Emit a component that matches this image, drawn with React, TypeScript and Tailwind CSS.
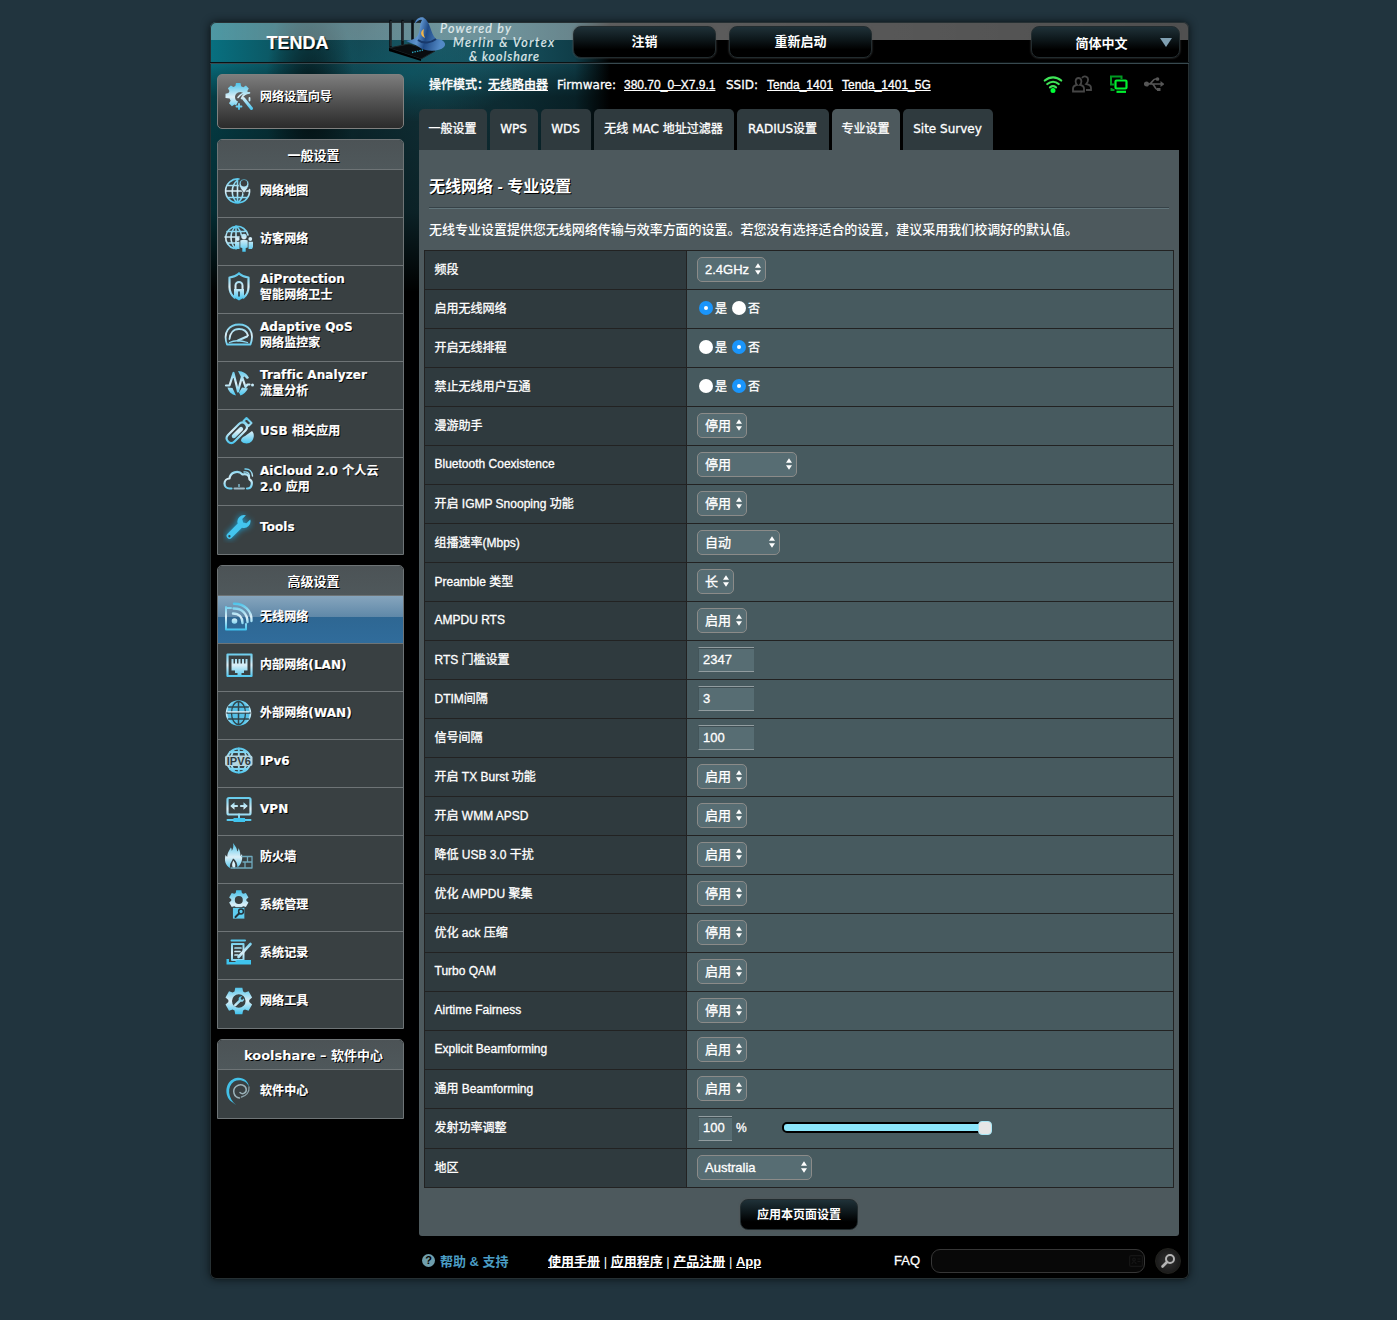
import React from 'react';

const SANS = "font-['Liberation_Sans','Noto_Sans_CJK_SC',sans-serif]";
const MENU = "font-['DejaVu_Sans','Noto_Sans_CJK_SC',sans-serif]";

const G = 'url(#ice)';

function Gear({ cx, cy, r, hole }: { cx: number; cy: number; r: number; hole: number }) {
  const pts: string[] = [];
  for (let i = 0; i < 6; i++) {
    const a = (i * Math.PI) / 3 - Math.PI / 2;
    const p = (rad: number, da: number) =>
      `${(cx + rad * Math.cos(a + da)).toFixed(2)} ${(cy + rad * Math.sin(a + da)).toFixed(2)}`;
    pts.push(p(r * 0.76, -0.42), p(r, -0.26), p(r, 0.26), p(r * 0.76, 0.42));
  }
  const h = `M${cx - hole} ${cy}a${hole} ${hole} 0 1 0 ${hole * 2} 0a${hole} ${hole} 0 1 0 ${-hole * 2} 0Z`;
  return <path d={`M${pts.join('L')}Z${h}`} fill={G} fillRule="evenodd" stroke="none" />;
}

const wrench = 'M3 13.5 9.2 7.3a4 4 0 0 1 5-5L12 4.6l.5 2 2 .5 2.300-2.300a4 4 0 0 1-5 5L5.500 16a1.700 1.700 0 0 1-2.500-2.500Z';

const icons: Record<string, React.ReactNode> = {
  wizard: (
    <g transform="translate(1.500 0)">
      <path
        d="M11.500 2h4.500l.6 3.200 2.200 1 2.600-1.600 2.900 2.900-1.500 2.500.6 1.500-3.900 1.200a5.200 5.200 0 0 0-8.900 4.300c.3 1.800 1.400 3 3 3.500l-2 3.800-1.600-.8-2.600 1.700-2.900-2.900 1.600-2.600-1-2.200L1 17v-4.300l3-.6 1-2.200-1.600-2.600 3-2.800 2.500 1.600 2-1Z"
        fill={G}
        stroke="none"
      />
      <path d="m19 17.500 8 10" strokeWidth="3" />
      <path d="M13.500 16.500c3-4 7-5.300 11.500-4.600-4 .2-6.500 2-8 5.600" strokeWidth="1.600" />
      <path d="M14.500 23v5M12 25.500h5M25 17v2.500" strokeWidth="1.800" />
    </g>
  ),
  map: (
    <>
      <path d="M16 4A12 12 0 1 0 26.500 14.500M14.500 5v23M3 16h23M5 10.500h12M5.500 22.500h18.500M14.500 5c-7 6-7 17 0 23M14.500 28c4-3.500 6-8 5.500-12" />
      <path d="M21 18.500c-2-3.500-5-6-5-9.500a5 5 0 0 1 10 0c0 3.500-3 6-5 9.500Z" fill={G} stroke="#3a4042" strokeWidth=".8" />
      <circle cx="21" cy="8.200" r="3.200" fill="#3a4042" stroke="none" />
    </>
  ),
  guest: (
    <>
      <path d="M11 25.500A11.300 11.300 0 1 1 25 12M13 3v23M2 14h14M4 8.500h18M4 20h8M13 3c-6.500 6-6.500 16-1 22M13 3c3.500 3 5 6 5.300 9" />
      <g fill={G} stroke="none">
        <circle cx="21" cy="13.500" r="2.700" />
        <path d="M17.300 17.500c1.700-1 5.700-1 7.400 0v7l-2 .5v3.700h-3.400v-3.700l-2-.5Z" />
        <circle cx="14.700" cy="16" r="1.900" />
        <path d="M12 18.800h4.500v7.200H13l-1-2ZM25.500 18.800H30V24l-1 2h-3.500Z" />
        <circle cx="27.300" cy="16" r="1.900" />
      </g>
    </>
  ),
  shield: (
    <>
      <path d="M16 2.500c3 2.500 6 3.700 9.500 4v9.500c0 5.500-3 9-5 10.500M16 2.500c-3 2.500-6 3.700-9.500 4v9.500c0 5.500 3 9 5 10.500" strokeWidth="2.200" />
      <path d="M12.500 18v-3.500a3.500 3.500 0 0 1 7 0V18" strokeWidth="2" />
      <path d="M11 18h10v8.500l-5 3-5-3Z" fill={G} stroke="none" />
      <path d="M16 21v4" stroke="#27343a" strokeWidth="1.600" />
    </>
  ),
  gauge: (
    <>
      <path d="M4 25.500C-.5 13 6.500 5.500 16 5.500S32 13 27.500 25.500Z" strokeWidth="1.800" />
      <path d="M6.500 20c.5-6 4-10 9.500-10s8 3 9 6.500" strokeWidth="1.800" />
      <path d="m15 21.500 9-4" strokeWidth="2.200" />
      <path d="M6.500 23.500c5-2.500 10-2.500 18 0" strokeWidth="1.300" />
    </>
  ),
  traffic: (
    <g transform="translate(1 0)">
      <path d="M2 18.500h3.500L9.500 6l4.500 18.500 4-15 3.500 10.500 2-2.500h2" strokeWidth="2.200" />
      <circle cx="28.500" cy="18" r="1.500" fill={G} stroke="none" />
      <path d="M14 4c5 0 9.500 3 11 7l-2 1-2.500-2.500-3 1.500L16 8ZM3.500 20.500l5 .5 3.500 7.500C7.500 27.500 4.500 24.500 3.500 20.500ZM15 25.500l3-5 6 1c-2 3.500-4.500 6-7.500 7Z" fill={G} stroke="none" />
    </g>
  ),
  usb: (
    <g transform="translate(1 0)">
      <path d="m4 20 11-11c2-2 4.500-2 6.500 0s2 4.500 0 6.500l-11 11c-2 2-4.500 2-6.500 0s-2-4.500 0-6.500Z" strokeWidth="2.200" />
      <path d="m9 20 7-7c1.500-1.200 3.300.5 2 2l-7 7c-1.500 1.500-3.500-.5-2-2Z" strokeWidth="1.500" fill={G} />
      <path d="m19.500 6 3-3 5 5-3 3Z" strokeWidth="2" />
      <path d="M17 26c0-3 2-4 4-5l7-5c3 3 2 8-.5 10.500s-7 3-10.500-.5Z" fill={G} stroke="none" />
    </g>
  ),
  cloud: (
    <>
      <path d="M8.500 25.500H6.500a5 5 0 0 1 0-10c.5-6 8.500-9 13-4 4-1.500 7 1 7 5 4 2 2.500 9-2 9H24" strokeWidth="2.200" />
      <path d="M11.500 25.500h9.500" stroke="#9db9c6" strokeWidth="2" />
      <path d="M16 21.500v2" strokeWidth="1.200" />
      <path d="M21 9c3-.5 5 1 5.500 4M22 6c4.500-.5 7.200 2.500 7.500 7" strokeWidth="1.400" />
    </>
  ),
  tools: (
    <g fill="#43c5ef" stroke="none" transform="translate(-.5 .5) scale(1.65)" style={{ filter: 'drop-shadow(0 0 2px #1aa7dd)' }}>
      <path d={wrench} />
      <circle cx="4.200" cy="15" r=".7" fill="#38474c" />
    </g>
  ),
  wireless: (
    <>
      <path d="M8 7H3v21.500h20V23M3 6v22" strokeWidth="2" />
      <circle cx="11.500" cy="20" r="2.800" fill={G} stroke="none" />
      <path d="M10 12.500c6 0 9.500 4 9.500 9.500M10.500 7.500c8.500-.5 14 5.500 14 13.500M11 2.800C21 2.500 29 9.500 28.500 20" strokeWidth="2.400" />
    </>
  ),
  lan: (
    <>
      <rect x="4.500" y="5.500" width="24" height="21.500" strokeWidth="2.200" />
      <path
        d="M8.500 10h2v4.500H12V10h2v4.500h1.500V10h2v4.500H19V10h2v4.500h1.500V10h2v11.500H21V24h-2.500v2.500h-4V24H12v-2.500H8.500Z"
        fill={G}
        stroke="none"
      />
    </>
  ),
  wan: (
    <>
      <circle cx="15.500" cy="16" r="12" fill="#55c0e6" />
      <ellipse cx="15.500" cy="16" rx="7" ry="11.500" stroke="#31454c" strokeWidth="1.300" />
      <path d="M15.500 4.500v23M4 16h23M5.500 10h20M5.500 22h20" stroke="#31454c" strokeWidth="1.500" />
      <path d="M5 14.800h21" stroke="#e4f4fa" strokeWidth="1.300" />
    </>
  ),
  ipv6: (
    <>
      <circle cx="15.800" cy="15.500" r="12" strokeWidth="2" />
      <path d="M15.800 3.500v7M15.800 20.500v7M7 7h17M7 24h17M10.500 5 8.500 10.500M21 5l2 5.500M8.500 20.500l2.500 5.500M23 20.500 20.500 26" strokeWidth="1.900" />
      <rect x="2" y="10.500" width="27.500" height="10.500" rx="2" fill="#b4d5e1" stroke="none" />
      <text
        x="3.800"
        y="19.500"
        fontSize="10.500"
        textLength="24"
        lengthAdjust="spacingAndGlyphs"
        fontWeight="700"
        fontFamily="Liberation Sans"
        fill="#2e3b40"
        stroke="none"
        className="[text-shadow:none]"
      >
        IPV6
      </text>
    </>
  ),
  vpn: (
    <>
      <rect x="4.500" y="5" width="23" height="16.500" rx="1.500" strokeWidth="2.200" />
      <path d="M9 13h5M18 13h5" strokeWidth="2.200" />
      <path d="M7.200 13 11.500 9.300v7.400ZM24.800 13 20.500 9.300v7.400Z" fill={G} stroke="none" />
      <path d="M16 21.500v4M4.500 27h23" strokeWidth="2" />
      <path d="M10.500 25h11.500v4H10.500Z" fill="#3fc4ee" stroke="none" />
    </>
  ),
  fire: (
    <>
      <path
        d="M10 2c2 3 4 4.500 4.200 8.500 1-.8 1.300-2 1.300-3.500 2 3.500 1.700 6 2 8l1.500-2c1 6-1 10.500-4.500 13.500-.2-5-2-7.500-4.500-9-1 3-3.500 4.500-3 9.500C2.500 24.500 1 20 2.500 14l1.700 2c.3-5 2.300-6.500 3.600-9.500 1 1 .9 2.300 1 3.500 1.500-2.500 2-5 1.200-8Z"
        fill={G}
        stroke="none"
      />
      <path d="M10.300 19.500c2.200 2.500 2.700 5.500 1.200 8-3.200-1-2.700-5-1.200-8Z" fill="#d9f1fa" stroke="none" />
      <path d="M19 15.500h10V27H8M20 21h9M24.500 15.500V21M22 21v6" stroke="#6fa9bd" strokeWidth="1.300" />
    </>
  ),
  admin: (
    <>
      <Gear cx={15.800} cy={11} r={10} hole={4} />
      <path d="M9.800 18.500h12V30h-12Z" fill="#5fcdf0" stroke="#3a4042" strokeWidth=".8" />
      <path d="m12.500 28 3.500-3.500" stroke="#24343b" strokeWidth="2" />
      <circle cx="18" cy="22.500" r="2.400" stroke="#24343b" strokeWidth="1.500" />
    </>
  ),
  log: (
    <>
      <path d="M8.500 3.500h13.500M9 7h11.500v16H9Z" strokeWidth="2" />
      <path d="M12 11h6M12 14.500h5M12 18h3" strokeWidth="1.700" />
      <path d="m15.500 20 12-13" strokeWidth="2.600" />
      <path d="M3.500 22v5.500H28V23H14l-2 2H6v-3Z" fill="#3fc4ee" stroke="none" />
    </>
  ),
  nettool: (
    <>
      <Gear cx={15.800} cy={16} r={13.800} hole={6.800} />
      <path transform="translate(9.300 9.800) scale(.7)" d={wrench} fill={G} stroke="none" />
    </>
  ),
  debian: (
    <>
      <path
        d="M16.500 23c-6-1-7.500-8-3.500-11.500 4-3.500 9.500-1.500 10.200 2.500.6 4-3.700 6-6.200 3.500"
        stroke="#9bb1b8"
        strokeWidth="1.500"
      />
      <path d="M26 12C25.500 5.500 19.500 1.500 13 3 3 5.500.5 18 7 25.500L13 30C5 23 3.500 12 11 6.500 16.500 4 23.500 5.500 26 12Z" fill="#43c1e8" stroke="none" />
      <path d="M26 12c.5 5.500-3 9-7.500 10" stroke="#8ba1a8" strokeWidth="1.300" />
    </>
  ),
};

function Icon({ name }: { name: string }) {
  return (
    <svg className="h-8 w-8 shrink-0" viewBox="0 0 32 32" fill="none" stroke={G} strokeWidth="1.600" strokeLinecap="round" strokeLinejoin="round">
      {icons[name]}
    </svg>
  );
}

interface Item {
  icon: string;
  lines: string[];
  active?: boolean;
}

const general: Item[] = [
  { icon: 'map', lines: ['网络地图'] },
  { icon: 'guest', lines: ['访客网络'] },
  { icon: 'shield', lines: ['AiProtection', '智能网络卫士'] },
  { icon: 'gauge', lines: ['Adaptive QoS', '网络监控家'] },
  { icon: 'traffic', lines: ['Traffic Analyzer', '流量分析'] },
  { icon: 'usb', lines: ['USB 相关应用'] },
  { icon: 'cloud', lines: ['AiCloud 2.0 个人云', '2.0 应用'] },
  { icon: 'tools', lines: ['Tools'] },
];

const advanced: Item[] = [
  { icon: 'wireless', lines: ['无线网络'], active: true },
  { icon: 'lan', lines: ['内部网络(LAN)'] },
  { icon: 'wan', lines: ['外部网络(WAN)'] },
  { icon: 'ipv6', lines: ['IPv6'] },
  { icon: 'vpn', lines: ['VPN'] },
  { icon: 'fire', lines: ['防火墙'] },
  { icon: 'admin', lines: ['系统管理'] },
  { icon: 'log', lines: ['系统记录'] },
  { icon: 'nettool', lines: ['网络工具'] },
];

function MenuSection({ title, items }: { title: string; items: Item[] }) {
  return (
    <div className={`w-[187px] overflow-hidden rounded-t-[5px] border border-[#6e7476] ${MENU} font-bold text-white [text-shadow:1px_1px_0_#000]`}>
      <div className="flex h-[29px] items-center justify-center bg-linear-to-b from-[#4c5356] to-[#4f585b] pl-1.5 pt-0.5 text-[13px] leading-4">{title}</div>
      {items.map((it) => (
        <div
          key={it.icon}
          className={`flex h-12 items-center border-t border-[#6e7476] pb-[5px] pl-[5px] last:h-[49px] last:pb-1.5 ${
            it.active ? 'bg-[linear-gradient(#86a5bd_0,#5f88a8_21px,#2e6793_21px,#306c9b_100%)]' : 'bg-[#394042]'
          }`}
        >
          <Icon name={it.icon} />
          <div className="ml-[5px] text-xs leading-4 tracking-[0.08px] [-webkit-text-stroke:0.2px_#fff]">
            {it.lines.map((l) => (
              <div key={l} className="h-4 whitespace-nowrap">
                {l}
              </div>
            ))}
          </div>
        </div>
      ))}
    </div>
  );
}

const tabs: { label: string; w: string; on?: boolean }[] = [
  { label: '一般设置', w: 'w-[68px]' },
  { label: 'WPS', w: 'w-[48px]' },
  { label: 'WDS', w: 'w-[50px]' },
  { label: '无线 MAC 地址过滤器', w: 'w-[140px]' },
  { label: 'RADIUS设置', w: 'w-[92px]' },
  { label: '专业设置', w: 'w-[68px]', on: true },
  { label: 'Site Survey', w: 'w-[90px]' },
];

function Select({ value, w }: { value: string; w: string }) {
  return (
    <div className={`flex h-[25px] items-center justify-between rounded-[5px] border border-[#8b8b89] bg-[#576d73] pl-[7px] pr-1 text-[13px] leading-4 ${w}`}>
      <span className="whitespace-nowrap pt-px">{value}</span>
      <svg className="h-3 w-[6px] shrink-0" viewBox="0 0 6 12" fill="#fff">
        <path d="M3 .3 6 4.800H0ZM3 11.700 6 7.200H0Z" />
      </svg>
    </div>
  );
}

function Radio({ on }: { on: boolean }) {
  return (
    <span className={`flex h-3.5 w-3.5 items-center justify-center rounded-full ${on ? 'bg-[#1a95fb]' : 'bg-white'}`}>
      {on && <span className="h-1 w-1 rounded-full bg-white" />}
    </span>
  );
}

function YesNo({ yes }: { yes: boolean }) {
  return (
    <div className="flex items-center pl-0.5 text-xs leading-4">
      <Radio on={yes} />
      <span className="ml-0.5 mr-[5px] w-3 pt-px">是</span>
      <Radio on={!yes} />
      <span className="ml-0.5 pt-px">否</span>
    </div>
  );
}

function TextBox({ value, w }: { value: string; w: string }) {
  return (
    <div className={`ml-px mt-px flex h-[25px] items-center border-y border-l border-b-[#929da0] border-l-[#43555a] border-t-[#929da0] bg-[#576d73] pl-1 text-[13px] leading-4 shadow-[inset_0_1px_0_#3f4f54] ${w}`}>
      {value}
    </div>
  );
}

const S50 = 'w-[50px]';
const rows: [string, React.ReactNode][] = [
  ['频段', <Select value="2.4GHz" w="w-[69px]" />],
  ['启用无线网络', <YesNo yes />],
  ['开启无线排程', <YesNo yes={false} />],
  ['禁止无线用户互通', <YesNo yes={false} />],
  ['漫游助手', <Select value="停用" w={S50} />],
  ['Bluetooth Coexistence', <Select value="停用" w="w-[100px]" />],
  ['开启 IGMP Snooping 功能', <Select value="停用" w={S50} />],
  ['组播速率(Mbps)', <Select value="自动" w="w-[83px]" />],
  ['Preamble 类型', <Select value="长" w="w-[37px]" />],
  ['AMPDU RTS', <Select value="启用" w={S50} />],
  ['RTS 门槛设置', <TextBox value="2347" w="w-[56px]" />],
  ['DTIM间隔', <TextBox value="3" w="w-[56px]" />],
  ['信号间隔', <TextBox value="100" w="w-[56px]" />],
  ['开启 TX Burst 功能', <Select value="启用" w={S50} />],
  ['开启 WMM APSD', <Select value="启用" w={S50} />],
  ['降低 USB 3.0 干扰', <Select value="启用" w={S50} />],
  ['优化 AMPDU 聚集', <Select value="停用" w={S50} />],
  ['优化 ack 压缩', <Select value="停用" w={S50} />],
  ['Turbo QAM', <Select value="启用" w={S50} />],
  ['Airtime Fairness', <Select value="停用" w={S50} />],
  ['Explicit Beamforming', <Select value="启用" w={S50} />],
  ['通用 Beamforming', <Select value="启用" w={S50} />],
  [
    '发射功率调整',
    <div className="flex items-center">
      <TextBox value="100" w="w-[34px]" />
      <span className="ml-1 w-[11px] text-xs">%</span>
      <div className="ml-[35px] flex h-[11px] w-[210px] items-center rounded-[5px] border-2 border-black bg-[#8ce6fb]">
        <span className="-mr-0.5 ml-auto h-3.5 w-3.5 shrink-0 rounded-[4px] border border-[#a7e6f5] bg-[#e6e6e6]" />
      </div>
    </div>,
  ],
  ['地区', <Select value="Australia" w="w-[115px]" />],
];

const latinOnly = (s: string) => /^[\x20-\x7e]+$/.test(s);

const darkBtn =
  'flex items-center justify-center rounded-lg border border-[#222c2f] bg-[linear-gradient(#1f3138_0%,#0c1518_45%,#000_75%)] text-[13px] font-bold shadow-[0_0_2px_#555]';

function Header() {
  return (
    <header className={`flex h-[42px] border-b border-[#38494f] shadow-[inset_0_-1px_0_#0b1214] ${SANS}`}>
      <div className="w-[175px] pt-[10px] text-center text-[18px] font-bold leading-[22px] [text-shadow:1px_1px_1px_#000] [-webkit-text-stroke:0.2px_#fff]">TENDA</div>
      <svg className="-mt-[6px] h-[52px] w-[188px] shrink-0" viewBox="0 0 188 52">
        <defs>
          <linearGradient id="hat" x1="0" x2="1" y1="0" y2=".2">
            <stop offset="0" stopColor="#2a5a99" />
            <stop offset=".4" stopColor="#5e93cd" />
            <stop offset=".6" stopColor="#1f4a86" />
            <stop offset="1" stopColor="#5289c6" />
          </linearGradient>
        </defs>
        <path d="M5.500 5v29M17.500 5v23M27.500 5v20" stroke="#0c1114" strokeWidth="2.600" strokeLinecap="round" />
        <path d="M6 5v25M18 5v20" stroke="#55666c" strokeWidth=".6" />
        <path d="m4 32 20-4 26 7-14 8Z" fill="#090c0e" stroke="#1d2528" />
        <path d="m4 32 32 11v2L4 35Z" fill="#000" />
        <path d="m27 36.500 11-2.500" stroke="#2aa1bd" strokeWidth="1.300" strokeDasharray="1.500 1" />
        <path d="M21 25c5-1 10-2 12-6 3-6 1-10 4-15-2-1-5 1-7 4 0-5 5-7.500 8.500-6.500C46 6 45 17 51 23c8 0 11 5 8 8-5 5-19 5-25 0-4-3-9-4-13-6Z" fill="url(#hat)" />
        <path d="M33 24c5 4 13 3 18-1" stroke="#18396b" strokeWidth="2" fill="none" />
        <path d="M39 13c-4 2-4 7 1 9-1.500-3-2-6-1-9Z" fill="#f0b44b" />
        <g fill="#dfe8ea" fontFamily="Lato, sans-serif" fontStyle="italic" fontSize="12.500" stroke="#dfe8ea" strokeWidth=".2">
          <text x="55" y="17" textLength="71">Powered by</text>
          <text x="68" y="31" textLength="101">Merlin &amp; Vortex</text>
          <text x="84" y="45" textLength="70">&amp; koolshare</text>
        </g>
      </svg>
      <div className={`mt-1 h-8 w-[143px] ${darkBtn}`}>注销</div>
      <div className={`ml-[13px] mt-1 h-8 w-[143px] ${darkBtn}`}>重新启动</div>
      <div className={`ml-auto mr-[9px] mt-1 h-8 w-[149px] ${darkBtn}`}>
        <span className="ml-[36px] mt-[3px]">简体中文</span>
        <svg className="ml-8 h-[9px] w-3" viewBox="0 0 12 9">
          <path d="M0 0h12L6 9Z" fill="#7f9fb1" />
        </svg>
      </div>
    </header>
  );
}

function StatusBar() {
  return (
    <div className={`flex h-[45px] whitespace-nowrap pl-2.5 pt-[13px] text-xs font-medium leading-4 [-webkit-text-stroke:0.3px_#fff] ${SANS}`}>
      <span className="w-[59px]">操作模式：</span>
      <span className="w-[69px] underline">无线路由器</span>
      <span className={`w-[67px] ${MENU}`}>Firmware:</span>
      <span className="w-[102px] underline">380.70_0–X7.9.1</span>
      <span className={`w-[41px] ${MENU}`}>SSID:</span>
      <span className="w-[75px] underline">Tenda_1401</span>
      <span className="underline">Tenda_1401_5G</span>
      <div className="-mt-0.5 ml-auto mr-[15px] flex h-[18px] items-center">
        <svg className="h-[18px] w-5" viewBox="0 0 20 18" fill="none" stroke="#3fe457" strokeWidth="2.200" strokeLinecap="round">
          <path d="M1.800 5.500c5-4.300 11.600-4.300 16.400 0M4.300 9c3.500-3 8-3 11.400 0M7 12.300c2-1.500 4-1.500 6 0" />
          <circle cx="10" cy="15.500" r="1.400" fill="#00ff37" stroke="#00ff37" />
        </svg>
        <svg className="ml-[9px] h-[18px] w-5" viewBox="0 0 20 18" fill="none" stroke="#464646" strokeWidth="1.800">
          <path d="M1 16.500v-3c0-3 2-3 4-3.500-2-2-2-7 1.500-7s3.500 5 1.500 7c2 .5 4 .5 4 3.500v3ZM10 3c2-3 6.500-1.500 6 2 0 2-.7 3-1.700 4 3 .5 4.700 1.500 4.700 4v2h-5" />
        </svg>
        <svg className="ml-[17px] h-[18px] w-5" viewBox="0 0 20 18" fill="none">
          <path d="M12.500 4V1.500H2v8h3M2.500 13v2h3" stroke="#009a22" strokeWidth="2" />
          <rect x="6.500" y="5.500" width="11" height="8" rx="1" stroke="#00f02f" strokeWidth="2.200" />
          <path d="M7.500 16.800h9.500" stroke="#00f02f" strokeWidth="2.200" />
        </svg>
        <svg className="ml-[15px] h-[18px] w-5" viewBox="0 0 20 18" fill="none" stroke="#565656" strokeWidth="1.700">
          <path d="M3 9h15M5 9c3 0 3.500-5 6.500-5h1.500M8 9c2.500 0 3 5.500 5 5.500h2" />
          <circle cx="2.500" cy="9" r="1.700" fill="#565656" />
          <path d="m16.500 6 4 3-4 3Z" fill="#565656" stroke="none" />
          <circle cx="13.500" cy="4" r="1" fill="#565656" />
          <path d="M13 13h3.500v3H13Z" fill="#565656" stroke="none" />
        </svg>
      </div>
    </div>
  );
}

function Footer() {
  return (
    <footer className={`flex h-[43px] items-center pt-1.5 text-[13px] font-bold leading-4 ${SANS}`}>
      <span className="ml-[3px] flex h-[13px] w-[13px] items-center justify-center rounded-full bg-[#6f9eac] text-[11px] leading-none text-black">?</span>
      <span className="ml-[5px] w-[108px] whitespace-nowrap pt-0.5 text-[#4b9dc4]">帮助 &amp; 支持</span>
      <span className="whitespace-nowrap pt-0.5">
        <span className="underline">使用手册</span> <span className="font-normal">|</span> <span className="underline">应用程序</span>{' '}
        <span className="font-normal">|</span> <span className="underline">产品注册</span> <span className="font-normal">|</span>{' '}
        <span className="underline">App</span>
      </span>
      <span className="ml-auto font-normal [-webkit-text-stroke:0.3px_#fff]">FAQ</span>
      <div className="ml-[11px] flex h-6 w-[214px] items-center justify-end rounded-[9px] border border-[#363636] bg-[#080808] pr-px">
        <svg className="h-3 w-[14px]" viewBox="0 0 14 12" fill="none" stroke="#151515" strokeWidth="1.200">
          <rect x=".6" y=".6" width="12.800" height="10.800" rx="1.500" />
          <path d="M3 9c0-3 4-3 4 0M8.500 4h3M8.500 6.500h3" />
          <circle cx="5" cy="4.500" r="1.300" />
        </svg>
      </div>
      <div className="-mr-0.5 ml-2.5 flex h-[26px] w-[26px] items-center justify-center rounded-full border border-[#22221e] bg-[radial-gradient(#333,#111)]">
        <svg className="h-4 w-4" viewBox="0 0 16 16" fill="none" stroke="#b5b5b5">
          <circle cx="10" cy="6" r="4" strokeWidth="2" />
          <path d="m7 9-4.500 4.500" strokeWidth="2.600" strokeLinecap="round" />
        </svg>
      </div>
    </footer>
  );
}

export default function App() {
  return (
    <div className={`h-[1320px] w-[1397px] bg-[#21343e] pt-[22px] text-white ${SANS}`}>
      <svg className="absolute h-0 w-0" aria-hidden="true">
        <defs>
          <linearGradient id="ice" gradientUnits="userSpaceOnUse" x1="0" y1="2" x2="0" y2="30">
            <stop offset="0" stopColor="#4bc3ea" />
            <stop offset=".5" stopColor="#dceff7" />
            <stop offset="1" stopColor="#35c0ee" />
          </linearGradient>
        </defs>
      </svg>
      <div className="ml-[210px] h-[1257px] w-[979px] rounded-md bg-black bg-[linear-gradient(90deg,#ffffff48_0,#ffffff60_300px,#ffffff50_100%),radial-gradient(ellipse_45px_110px_at_100px_75px,#0009_10%,#0000),radial-gradient(ellipse_110px_50px_at_200px_50px,#0d5562cc,#0000),linear-gradient(180deg,#0000_0,#0000_38px,#0007_75px,#0009_190px,#000_270px),linear-gradient(90deg,#087080_0,#0c5561_70px,#154853_150px,#1f5966_230px,#17505d_300px,#0f3d48_365px,#000_400px)] bg-[size:100%_18px,100%_100%,100%_100%,100%_100%,100%_100%] bg-no-repeat shadow-[0_0_8px_#0a1114,inset_0_0_0_1px_#263033]">
        <Header />
        <div className="flex">
          <aside className="ml-[7px] mt-2.5 flex flex-col gap-2.5">
            <div className={`flex h-[55px] w-[187px] items-center rounded-[5px] border border-[#80807f] bg-linear-to-b from-[#7d7d7d] to-[#2b2b2b] pb-2.5 pl-[5px] text-xs font-bold [text-shadow:1px_1px_0_#000] ${MENU}`}>
              <Icon name="wizard" />
              <span className="ml-[5px]">网络设置向导</span>
            </div>
            <MenuSection title="一般设置" items={general} />
            <MenuSection title="高级设置" items={advanced} />
            <MenuSection title="koolshare – 软件中心" items={[{ icon: 'debian', lines: ['软件中心'] }]} />
          </aside>
          <main className="ml-[15px] w-[760px]">
            <StatusBar />
            <nav className={`flex gap-[3px] text-xs [-webkit-text-stroke:0.3px_#fff] ${MENU}`}>
              {tabs.map((t) => (
                <div key={t.label} className={`flex h-[41px] items-center justify-center whitespace-nowrap rounded-t-[5px] pb-px pr-px ${t.w} ${t.on ? 'bg-[#4d595d]' : 'bg-[#2f3a3e]'}`}>
                  {t.label}
                </div>
              ))}
            </nav>
            <section className="h-[1086px] rounded-b-[3px] bg-[#4d595d] px-[5px] pt-[25px]">
              <h1 className="ml-[5px] text-base font-bold leading-6 [text-shadow:1px_1px_0_#000]">无线网络 - 专业设置</h1>
              <div className="mx-[5px] mt-2 h-0.5 border-b border-t border-b-[#62757b] border-t-[#364247]" />
              <p className="ml-[5px] mt-[11px] h-[30px] text-[13px] font-medium leading-5 tracking-[-0.02px]">
                无线专业设置提供您无线网络传输与效率方面的设置。若您没有选择适合的设置，建议采用我们校调好的默认值。
              </p>
              <div className="w-[750px] border border-[#222] text-xs [-webkit-text-stroke:0.3px_#fff]">
                {rows.map(([label, control], i) => (
                  <div key={label} className={`flex ${i === 22 ? 'h-10' : 'h-[39px]'} border-b border-[#222] last:h-[38px] last:border-b-0`}>
                    <div className={`flex w-[262px] items-center border-r border-[#222] bg-[#2f3a3e] pl-[9.5px] ${latinOnly(label) ? 'pb-0.5' : 'pb-px'}`}>{label}</div>
                    <div className="flex flex-1 items-center bg-[#475a5f] pb-0.5 pl-2.5">{control}</div>
                  </div>
                ))}
              </div>
              <div className={`mx-auto mt-[11px] h-[31px] w-[118px] ${darkBtn} !text-xs`}>应用本页面设置</div>
            </section>
            <Footer />
          </main>
        </div>
      </div>
    </div>
  );
}
